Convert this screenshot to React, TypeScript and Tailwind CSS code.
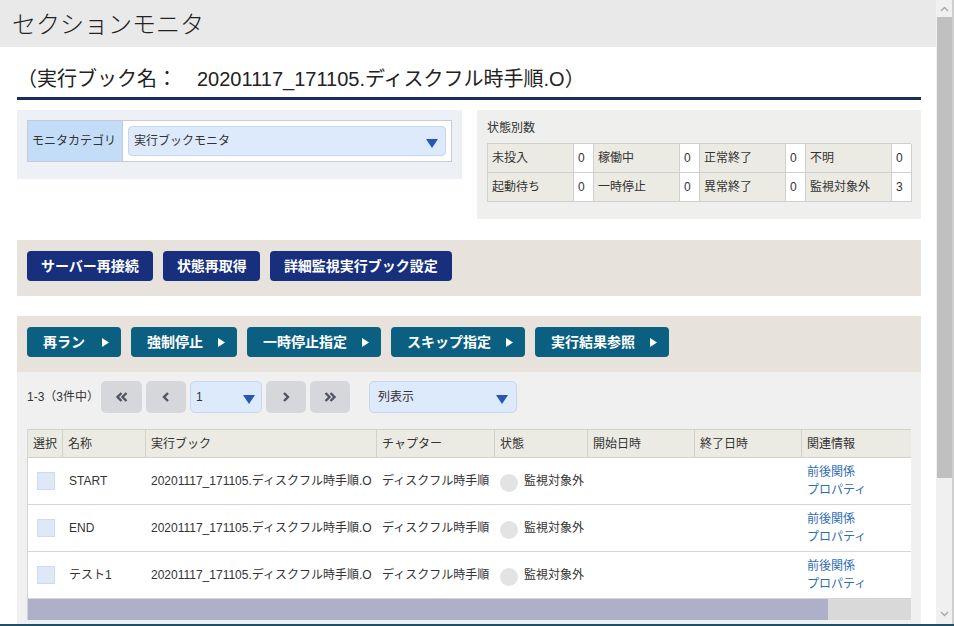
import React from "react";

function DownTri({ className = "" }: { className?: string }) {
  return (
    <svg width="12" height="9" viewBox="0 0 12 9" className={className}>
      <polygon points="0,0 12,0 6,9" fill="#2656b6" />
    </svg>
  );
}

function RightTri() {
  return (
    <svg width="7" height="9" viewBox="0 0 7 9">
      <polygon points="0,0 7,4.5 0,9" fill="#ffffff" />
    </svg>
  );
}

function Chev({ dir, double }: { dir: "l" | "r"; double?: boolean }) {
  const single = dir === "l" ? "M7 1 L3 5 L7 9" : "M3 1 L7 5 L3 9";
  return (
    <svg width={double ? 14 : 10} height="10" viewBox={double ? "0 0 14 10" : "0 0 10 10"}>
      {double ? (
        dir === "l" ? (
          <>
            <path d="M6.5 1 L2.5 5 L6.5 9" stroke="#4f5462" strokeWidth="2.4" fill="none" />
            <path d="M11.5 1 L7.5 5 L11.5 9" stroke="#4f5462" strokeWidth="2.4" fill="none" />
          </>
        ) : (
          <>
            <path d="M2.5 1 L6.5 5 L2.5 9" stroke="#4f5462" strokeWidth="2.4" fill="none" />
            <path d="M7.5 1 L11.5 5 L7.5 9" stroke="#4f5462" strokeWidth="2.4" fill="none" />
          </>
        )
      ) : (
        <path d={single} stroke="#4f5462" strokeWidth="2.4" fill="none" />
      )}
    </svg>
  );
}

const statusRows = [
  [
    ["未投入", "0"],
    ["稼働中", "0"],
    ["正常終了", "0"],
    ["不明", "0"],
  ],
  [
    ["起動待ち", "0"],
    ["一時停止", "0"],
    ["異常終了", "0"],
    ["監視対象外", "3"],
  ],
];

const headers = ["選択", "名称", "実行ブック", "チャプター", "状態", "開始日時", "終了日時", "関連情報"];
const rows = ["START", "END", "テスト1"];

export default function App() {
  return (
    <div className="w-[954px] h-[626px] overflow-hidden bg-white flex flex-col font-['Liberation_Sans','Noto_Sans_CJK_JP',sans-serif] text-[#333]">
      <div className="flex flex-1 min-h-0">
        {/* main */}
        <div className="w-[936px] flex flex-col overflow-hidden">
          <div className="h-[47px] shrink-0 bg-[#e9e9e9] pl-[12px] pb-[2px] flex items-center text-[24px] font-light text-[#222] font-['Noto_Sans_CJK_JP',sans-serif]">
            セクションモニタ
          </div>
          <div className="flex-1 flex flex-col pl-[17px] pr-[15px] min-h-0">
            <div className="pt-[20px] pb-[6px] leading-[24px] text-[20px] text-[#222] border-b-[3px] border-[#1b2b5e] whitespace-nowrap">
              （実行ブック名：　20201117_171105.ディスクフル時手順.O）
            </div>

            <div className="mt-[10px] flex justify-between items-start">
              {/* monitor category */}
              <div className="w-[445px] h-[69px] bg-[#edf0f5] pt-[10px] pl-[10px] pr-[10px]">
                <div className="flex h-[42px] border border-[#c9c9d9] bg-white">
                  <div className="w-[95px] bg-[#c3dcf7] border-r border-[#c9c9d9] text-[12px] flex items-center pl-[4px] whitespace-nowrap">
                    モニタカテゴリ
                  </div>
                  <div className="flex-1 flex items-center pl-[5px] pr-[5px]">
                    <div className="h-[30px] flex-1 bg-[#ddeafb] border border-[#c8d6ea] rounded-[4px] flex items-center justify-between pl-[5px] pr-[7px] text-[12px]">
                      <span>実行ブックモニタ</span>
                      <DownTri className="mt-[4px]" />
                    </div>
                  </div>
                </div>
              </div>

              {/* status count */}
              <div className="w-[444px] h-[109px] bg-[#efefed] pl-[10px] pr-[10px] pt-[9px]">
                <div className="text-[12px] leading-[18px]">状態別数</div>
                <div className="mt-[6px] grid grid-cols-[86px_20px_86px_20px_86px_20px_86px_20px] border-l border-t border-[#cfcfcf]">
                  {statusRows.flat().map(([label, val], i) => (
                    <React.Fragment key={i}>
                      <div className="h-[29px] bg-[#ebebe3] border-r border-b border-[#cfcfcf] text-[12px] flex items-center pl-[4px] whitespace-nowrap">
                        {label}
                      </div>
                      <div className="h-[29px] bg-white border-r border-b border-[#cfcfcf] text-[12px] flex items-center pl-[4px]">
                        {val}
                      </div>
                    </React.Fragment>
                  ))}
                </div>
              </div>
            </div>

            {/* bar 1 */}
            <div className="mt-[21px] h-[56px] shrink-0 bg-[#e7e3dc] pt-[11px] pl-[10px] flex gap-[10px] items-start">
              {["サーバー再接続", "状態再取得", "詳細監視実行ブック設定"].map((t, i) => (
                <div
                  key={t}
                  className={`h-[30px] ${i === 1 ? "pl-[14px] pr-[13px]" : "px-[14px]"} rounded-[4px] bg-[#172f7c] text-white text-[14px] font-bold flex items-center whitespace-nowrap`}
                >
                  {t}
                </div>
              ))}
            </div>

            {/* bar 2 */}
            <div className="mt-[20px] h-[56px] shrink-0 bg-[#e7e3dc] pt-[11px] pl-[10px] flex gap-[10px] items-start">
              {["再ラン", "強制停止", "一時停止指定", "スキップ指定", "実行結果参照"].map((t, i) => (
                <div
                  key={t}
                  className={`h-[30px] pl-[16px] pr-[12px] rounded-[4px] bg-[#0b5f80] text-white text-[14px] font-bold flex items-center ${i === 0 ? "gap-[17px]" : "gap-[15px]"} whitespace-nowrap`}
                >
                  <span>{t}</span>
                  <RightTri />
                </div>
              ))}
            </div>

            {/* list section */}
            <div className="flex-1 bg-[#f0f0f0] pl-[10px] pr-[10px] pt-[9px]">
              <div className="flex items-center h-[32px]">
                <div className="w-[74px] text-[12px] whitespace-nowrap">1-3（3件中）</div>
                <div className="flex gap-[4px]">
                  <div className="w-[41px] h-[32px] rounded-[5px] bg-[#d6d7da] flex items-center justify-center">
                    <Chev dir="l" double />
                  </div>
                  <div className="w-[40px] h-[32px] rounded-[5px] bg-[#d6d7da] flex items-center justify-center">
                    <Chev dir="l" />
                  </div>
                  <div className="w-[72px] h-[32px] rounded-[5px] bg-[#ddeafb] border border-[#c8d6ea] flex items-center justify-between pl-[5px] pr-[6px] text-[12px]">
                    <span>1</span>
                    <DownTri className="mt-[4px]" />
                  </div>
                  <div className="w-[40px] h-[32px] rounded-[5px] bg-[#d6d7da] flex items-center justify-center">
                    <Chev dir="r" />
                  </div>
                  <div className="w-[40px] h-[32px] rounded-[5px] bg-[#d6d7da] flex items-center justify-center">
                    <Chev dir="r" double />
                  </div>
                </div>
                <div className="ml-[19px] w-[148px] h-[32px] rounded-[5px] bg-[#ddeafb] border border-[#c8d6ea] flex items-center justify-between pl-[8px] pr-[8px] text-[12px]">
                  <span>列表示</span>
                  <DownTri className="mt-[4px]" />
                </div>
              </div>

              {/* table */}
              <div className="mt-[16px] w-[884px] border-l border-[#d4d4d4]">
                <div className="grid grid-cols-[35px_83px_231px_118px_93px_107px_107px_110px] h-[29px] bg-[#ebebe3] border-t border-b border-[#d2d2ca]">
                  {headers.map((h, i) => (
                    <div
                      key={h}
                      className={`flex items-center pl-[5px] text-[12px] whitespace-nowrap ${i < headers.length - 1 ? "border-r border-[#d2d2ca]" : ""}`}
                    >
                      {h}
                    </div>
                  ))}
                </div>
                {rows.map((name) => (
                  <div
                    key={name}
                    className="grid grid-cols-[35px_83px_231px_118px_93px_107px_107px_110px] h-[47px] bg-white border-b border-[#d4d4d4] text-[12px]"
                  >
                    <div className="flex items-center pl-[9px]">
                      <div className="w-[18px] h-[18px] bg-[#dde9f8] border border-[#d0dcea]" />
                    </div>
                    <div className="flex items-center pl-[6px] whitespace-nowrap">{name}</div>
                    <div className="flex items-center pl-[5px] whitespace-nowrap overflow-hidden">
                      20201117_171105.ディスクフル時手順.O
                    </div>
                    <div className="flex items-center pl-[5px] whitespace-nowrap overflow-hidden">
                      ディスクフル時手順
                    </div>
                    <div className="flex items-center pl-[5px] gap-[6px] whitespace-nowrap">
                      <div className="w-[18px] h-[18px] rounded-full bg-[#e3e3e3] mt-[3px]" />
                      <span>監視対象外</span>
                    </div>
                    <div />
                    <div />
                    <div className="flex flex-col justify-center pl-[5px] leading-[18px] text-[#2f6db2]">
                      <span>前後関係</span>
                      <span>プロパティ</span>
                    </div>
                  </div>
                ))}
                <div className="h-[21px] bg-[#d9d9d9] flex">
                  <div className="w-[800px] h-full bg-[#adb0c8]" />
                </div>
              </div>
            </div>
          </div>
        </div>

        {/* vertical scrollbar */}
        <div className="w-[16px] bg-[#f0f0f0] flex flex-col items-center">
          <div className="h-[17px] w-full flex items-center justify-center">
            <svg width="9" height="6" viewBox="0 0 9 6">
              <path d="M1 5 L4.5 1.5 L8 5" stroke="#a6a6a6" strokeWidth="1.3" fill="none" />
            </svg>
          </div>
          <div className="w-[15px] h-[461px] bg-[#c0c0c0]" />
          <div className="flex-1" />
          <div className="h-[17px] w-full flex items-center justify-center mb-[2px]">
            <svg width="9" height="6" viewBox="0 0 9 6">
              <path d="M1 1 L4.5 4.5 L8 1" stroke="#a6a6a6" strokeWidth="1.3" fill="none" />
            </svg>
          </div>
        </div>
        <div className="w-[2px] bg-[#cfcfcf]" />
      </div>
      <div className="h-[2px] shrink-0 bg-[#1f5068]" />
    </div>
  );
}
